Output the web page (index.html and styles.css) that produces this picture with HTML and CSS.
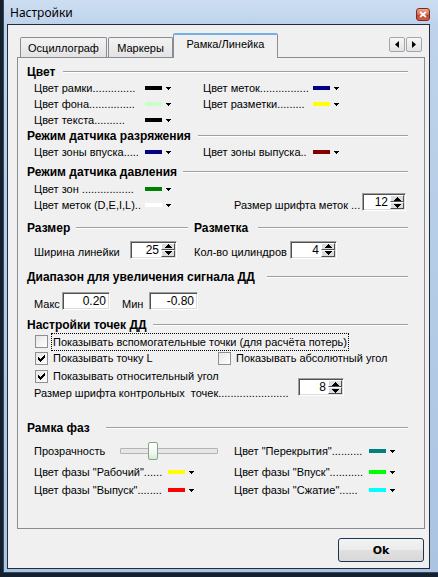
FILE: index.html
```html
<!DOCTYPE html>
<html lang="ru">
<head>
<meta charset="utf-8">
<title>Настройки</title>
<link rel="stylesheet" href="styles.css">
</head>
<body>
<svg class="defs" aria-hidden="true">
  <defs>
    <symbol id="dd" viewBox="0 0 5 3"><rect x="0" y="0" width="5" height="1"/><rect x="1" y="1" width="3" height="1"/><rect x="2" y="2" width="1" height="1"/></symbol>
    <symbol id="up" viewBox="0 0 7 4"><rect x="3" y="0" width="1" height="1"/><rect x="2" y="1" width="3" height="1"/><rect x="1" y="2" width="5" height="1"/><rect x="0" y="3" width="7" height="1"/></symbol>
    <symbol id="down" viewBox="0 0 7 4"><rect x="0" y="0" width="7" height="1"/><rect x="1" y="1" width="5" height="1"/><rect x="2" y="2" width="3" height="1"/><rect x="3" y="3" width="1" height="1"/></symbol>
    <symbol id="chk" viewBox="0 0 7 7"><rect x="6" y="0" width="1" height="1"/><rect x="5" y="1" width="2" height="1"/><rect x="0" y="2" width="1" height="1"/><rect x="4" y="2" width="3" height="1"/><rect x="0" y="3" width="2" height="1"/><rect x="3" y="3" width="3" height="1"/><rect x="0" y="4" width="5" height="1"/><rect x="1" y="5" width="3" height="1"/><rect x="2" y="6" width="1" height="1"/></symbol>
  </defs>
</svg>
<div class="window">
  <div class="titlebar">
    <span class="title">Настройки</span>
    <span class="close"><svg class="xicon" viewBox="0 0 8 7"><path d="M1 1 L7 6 M7 1 L1 6" stroke="#fff" stroke-width="1.8" fill="none"/></svg></span>
  </div>
  <div class="client">
    <div class="tabstrip">
      <div class="tab tab1">Осциллограф</div>
      <div class="tab tab2">Маркеры</div>
      <div class="tab active">Рамка/Линейка</div>
      <div class="tabscroll">
        <span class="sbtn"><svg class="tri" viewBox="0 0 4 7"><path d="M4 0 L0 3.5 L4 7Z"/></svg></span>
        <span class="sbtn"><svg class="tri" viewBox="0 0 4 7"><path d="M0 0 L4 3.5 L0 7Z"/></svg></span>
      </div>
    </div>
    <div class="panel">
      <div class="hdr mt6"><span class="ht w-cvet">Цвет</span></div>
      <div class="crow">
        <div class="ci cl"><span class="lbl l104">Цвет рамки..............</span><i class="sw c-black"></i><svg class="dd"><use href="#dd"/></svg></div>
        <div class="ci"><span class="lbl r107">Цвет меток................</span><i class="sw c-navy"></i><svg class="dd"><use href="#dd"/></svg></div>
      </div>
      <div class="crow">
        <div class="ci cl"><span class="lbl l104">Цвет фона...............</span><i class="sw c-pale"></i><svg class="dd"><use href="#dd"/></svg></div>
        <div class="ci"><span class="lbl r107">Цвет разметки.........</span><i class="sw c-yellow"></i><svg class="dd"><use href="#dd"/></svg></div>
      </div>
      <div class="crow">
        <div class="ci cl"><span class="lbl l104">Цвет текста..........</span><i class="sw c-black"></i><svg class="dd"><use href="#dd"/></svg></div>
      </div>
      <div class="hdr"><span class="ht w-razr">Режим датчика разряжения</span></div>
      <div class="crow">
        <div class="ci cl"><span class="lbl l104">Цвет зоны впуска.....</span><i class="sw c-navy"></i><svg class="dd"><use href="#dd"/></svg></div>
        <div class="ci"><span class="lbl r107">Цвет зоны выпуска..</span><i class="sw c-maroon"></i><svg class="dd"><use href="#dd"/></svg></div>
      </div>
      <div class="hdr mt4"><span class="ht w-davl">Режим датчика давления</span></div>
      <div class="crow mt1">
        <div class="ci cl"><span class="lbl l104">Цвет зон .................</span><i class="sw c-green"></i><svg class="dd"><use href="#dd"/></svg></div>
      </div>
      <div class="crow top">
        <div class="ci cl2"><span class="lbl l108">Цвет меток (D,E,I,L)..</span><i class="sw c-white"></i><svg class="dd"><use href="#dd"/></svg></div>
        <span class="lbl w128">Размер шрифта меток ...</span>
        <div class="spin s44 up4"><span class="sval">12</span><span class="sbtns"><span class="sb"><svg class="ar"><use href="#up"/></svg></span><span class="sb"><svg class="ar"><use href="#down"/></svg></span></span></div>
      </div>
      <div class="hrow mt7">
        <div class="hdr half"><span class="ht w-razm">Размер</span></div>
        <div class="hdr rest"><span class="ht w-razmet">Разметка</span></div>
      </div>
      <div class="srow mt4">
        <span class="slbl w96">Ширина линейки</span>
        <div class="spin s47"><span class="sval">25</span><span class="sbtns"><span class="sb"><svg class="ar"><use href="#up"/></svg></span><span class="sb"><svg class="ar"><use href="#down"/></svg></span></span></div>
        <span class="slbl w96 gap17">Кол-во цилиндров</span>
        <div class="spin s47"><span class="sval">4</span><span class="sbtns"><span class="sb"><svg class="ar"><use href="#up"/></svg></span><span class="sb"><svg class="ar"><use href="#down"/></svg></span></span></div>
      </div>
      <div class="hdr mt10"><span class="ht w-diap">Диапазон для увеличения сигнала ДД</span></div>
      <div class="erow mt7">
        <span class="slbl w28">Макс</span>
        <span class="edit e48">0.20</span>
        <span class="slbl w27 gap12">Мин</span>
        <span class="edit e49">-0.80</span>
      </div>
      <div class="hdr mt7"><span class="ht w-tochek">Настройки точек ДД</span></div>
      <div class="cbrow r17">
        <span class="cb"></span><span class="cblbl focus">Показывать вспомогательные точки (для расчёта потерь)</span>
      </div>
      <div class="cbrow r16">
        <div class="cbitem w183"><span class="cb"><svg class="chk"><use href="#chk"/></svg></span><span class="cblbl">Показывать точку L</span></div>
        <div class="cbitem"><span class="cb"></span><span class="cblbl">Показывать абсолютный угол</span></div>
      </div>
      <div class="cbrow r18 mt1">
        <span class="cb"><svg class="chk"><use href="#chk"/></svg></span><span class="cblbl">Показывать относительный угол</span>
      </div>
      <div class="crow top r15">
        <span class="lbl w264">Размер шрифта контрольных&nbsp; точек.......................</span>
        <div class="spin s46 up7"><span class="sval">8</span><span class="sbtns"><span class="sb"><svg class="ar"><use href="#up"/></svg></span><span class="sb"><svg class="ar"><use href="#down"/></svg></span></span></div>
      </div>
      <div class="hdr mt20"><span class="ht w-faz">Рамка фаз</span></div>
      <div class="prow mt6">
        <div class="pcol">
          <span class="lbl w86">Прозрачность</span>
          <div class="slider"><span class="track"></span><span class="thumb"></span></div>
        </div>
        <div class="ci"><span class="lbl w135">Цвет &quot;Перекрытия&quot;..........</span><i class="sw c-teal"></i><svg class="dd"><use href="#dd"/></svg></div>
      </div>
      <div class="prow mt3">
        <div class="pcol"><span class="lbl w134">Цвет фазы &quot;Рабочий&quot;......</span><i class="sw c-yellow"></i><svg class="dd"><use href="#dd"/></svg></div>
        <div class="ci"><span class="lbl w135">Цвет фазы &quot;Впуск&quot;...........</span><i class="sw c-lime"></i><svg class="dd"><use href="#dd"/></svg></div>
      </div>
      <div class="prow">
        <div class="pcol"><span class="lbl w134">Цвет фазы &quot;Выпуск&quot;........</span><i class="sw c-red"></i><svg class="dd"><use href="#dd"/></svg></div>
        <div class="ci"><span class="lbl w135">Цвет фазы &quot;Сжатие&quot;......</span><i class="sw c-cyan"></i><svg class="dd"><use href="#dd"/></svg></div>
      </div>
    </div>
    <div class="footer"><button class="ok">Ok</button></div>
  </div>
</div>
</body>
</html>
```
FILE: styles.css
```css
* { box-sizing: border-box; margin: 0; padding: 0; }
html, body { width: 438px; height: 577px; overflow: hidden; }
body {
  background: #16212f;
  font-family: "Liberation Sans", Arial, sans-serif;
  font-size: 11px;
  line-height: 1;
  color: #000;
}
.defs { position: absolute; width: 0; height: 0; overflow: hidden; }

.window {
  margin-left: 3px;
  width: 435px;
  height: 573px;
  border-left: 1px solid #34475f;
  border-bottom: 1px solid #34475f;
  background: linear-gradient(180deg, #cddef1 0, #bed3eb 24px, #abc4e2 100%);
  display: flex;
  flex-direction: column;
}
.titlebar { height: 24px; display: flex; align-items: flex-start; padding-left: 6px; }
.title {
  font-family: "Noto Sans", "Open Sans", sans-serif;
  font-size: 12px;
  line-height: 16px;
  margin-top: 5px;
}
.close {
  margin-left: auto;
  margin-right: 8px;
  margin-top: 8px;
  width: 14px;
  height: 13px;
  border: 1px solid #7a2c22;
  border-radius: 3px;
  background: linear-gradient(#eea592, #d76a52 50%, #c33d26 51%, #d25e42);
  display: flex;
  align-items: center;
  justify-content: center;
}
.xicon { width: 8px; height: 7px; display: block; }

.client {
  margin-left: 3px;
  width: 423px;
  height: 545px;
  border: 1px solid #1f2d3f;
  background: #f0f0f0;
  display: flex;
  flex-direction: column;
}

.tabstrip {
  margin: 8px 0 0 9px;
  width: 408px;
  height: 24px;
  display: flex;
  align-items: flex-end;
  padding-left: 3px;
  position: relative;
  z-index: 1;
}
.tab {
  height: 20px;
  border: 1px solid #898c95;
  border-bottom: 0;
  border-radius: 2px 2px 0 0;
  background: linear-gradient(#f3f3f3, #e3e3e3);
  display: flex;
  justify-content: center;
  padding-top: 4px;
  line-height: 13px;
  font-size: 11px;
  white-space: nowrap;
}
.tab1 { width: 87px; }
.tab2 { width: 65px; margin-left: 1px; }
.tab.active {
  width: 105px;
  height: 25px;
  margin-bottom: -1px;
  background: #f0f0f0;
  border-top: 2px solid #76aee6;
  padding-top: 3px;
}
.tabscroll {
  margin-left: auto;
  margin-right: 3px;
  align-self: flex-start;
  margin-top: 4px;
  display: flex;
  gap: 1px;
}
.sbtn {
  width: 16px;
  height: 15px;
  border: 1px solid #a3a6ab;
  border-radius: 2px;
  background: linear-gradient(#f7f7f7, #e2e2e2);
  display: flex;
  align-items: center;
  justify-content: center;
}
.tri { width: 4px; height: 7px; display: block; }

.panel {
  margin-left: 9px;
  width: 408px;
  height: 472px;
  border: 1px solid #898c95;
  background: #f0f0f0;
  padding: 0 16px 0 9px;
  display: flex;
  flex-direction: column;
}

.hdr {
  height: 16px;
  display: flex;
  align-items: center;
  font-family: "Liberation Sans", Arial, sans-serif;
  font-weight: bold;
  font-size: 12px;
  white-space: nowrap;
}
.hdr::after {
  content: "";
  flex: 1;
  height: 0;
  border-top: 1px solid #a0a0a0;
  border-bottom: 1px solid #ffffff;
}
.ht { display: block; line-height: 16px; }
.w-cvet { width: 36px; }
.w-razr { width: 171px; }
.w-davl { width: 156px; }
.w-razm { width: 49px; }
.w-razmet { width: 64px; }
.w-diap { width: 240px; }
.w-tochek { width: 126px; }
.w-faz { width: 79px; }

.hrow { display: flex; }
.hdr.half { width: 161px; }
.hdr.rest { flex: 1; margin-left: 6px; }

.mt1 { margin-top: 1px; }
.mt3 { margin-top: 3px; }
.mt4 { margin-top: 4px; }
.mt6 { margin-top: 6px; }
.mt7 { margin-top: 7px; }
.mt10 { margin-top: 10px; }
.mt20 { margin-top: 20px; }

.crow { display: flex; align-items: center; height: 16px; padding-left: 7px; }
.crow.top { align-items: flex-start; }
.crow.r15 { height: 15px; }
.ci { display: flex; align-items: center; height: 16px; }
.cl { width: 169px; }
.cl2 { width: 200px; }
.lbl { display: block; white-space: nowrap; overflow: hidden; line-height: 16px; }
.l104 { width: 104px; margin-right: 7px; }
.l108 { width: 108px; margin-right: 3px; }
.r107 { width: 107px; margin-right: 3px; }
.w128 { width: 128px; }
.w264 { width: 264px; }
.w86 { width: 86px; }
.w134 { width: 130px; margin-right: 4px; }
.w135 { width: 132px; margin-right: 3px; }

.sw { display: block; width: 17px; height: 4px; }
.dd { display: block; width: 5px; height: 3px; margin-left: 4px; fill: #000; }
.c-black { background: #000000; }
.c-navy { background: #000080; }
.c-pale { background: #c8ffc8; }
.c-yellow { background: #ffff00; }
.c-maroon { background: #800000; }
.c-green { background: #008000; }
.c-white { background: #ffffff; }
.c-teal { background: #008080; }
.c-lime { background: #00ff00; }
.c-red { background: #ff0000; }
.c-cyan { background: #00ffff; }

.spin {
  display: flex;
  height: 18px;
  border: 1px solid;
  border-color: #a0a0a0 #ffffff #ffffff #a0a0a0;
  box-shadow: inset 1px 1px 0 #505050, inset -1px -1px 0 #dcdcdc;
  background: #fff;
}
.s44 { width: 44px; }
.s46 { width: 46px; }
.s47 { width: 47px; }
.up4 { margin-top: -4px; }
.up7 { margin-top: -7px; }
.sval { flex: 1; text-align: right; padding-right: 2px; line-height: 16px; font-size: 12px; }
.sbtns { width: 14px; display: flex; flex-direction: column; margin: 1px 1px 1px 0; }
.sb {
  flex: 1;
  background: #dcdcdc;
  border: 1px solid;
  border-color: #ffffff #505050 #505050 #ffffff;
  display: flex;
  align-items: center;
  justify-content: center;
}
.ar { display: block; width: 7px; height: 4px; fill: #000; }

.srow { display: flex; align-items: center; height: 19px; padding-left: 7px; }
.slbl { display: block; white-space: nowrap; line-height: 16px; margin-top: 5px; }
.w96 { width: 96px; }
.w28 { width: 28px; }
.w27 { width: 27px; }
.gap17 { margin-left: 17px; }
.gap12 { margin-left: 12px; }

.erow { display: flex; align-items: center; height: 18px; padding-left: 7px; }
.edit {
  display: block;
  height: 18px;
  border: 1px solid;
  border-color: #a0a0a0 #ffffff #ffffff #a0a0a0;
  box-shadow: inset 1px 1px 0 #505050, inset -1px -1px 0 #dcdcdc;
  background: #fff;
  text-align: right;
  padding-right: 3px;
  line-height: 16px;
  font-size: 12px;
}
.e48 { width: 48px; }
.e49 { width: 49px; }

.cbrow { display: flex; align-items: center; padding-left: 8px; }
.r16 { height: 16px; }
.r17 { height: 17px; }
.r18 { height: 18px; }
.cbitem { display: flex; align-items: center; }
.w183 { width: 183px; }
.cb {
  width: 13px;
  height: 13px;
  border: 1px solid #8e8f8f;
  background: linear-gradient(135deg, #e6e6e6, #ffffff);
  display: flex;
  align-items: center;
  justify-content: center;
  flex: none;
}
.chk { display: block; width: 7px; height: 7px; fill: #000; }
.cblbl { display: block; white-space: nowrap; line-height: 16px; margin-left: 5px; }
.cblbl.focus {
  margin-left: 3px;
  padding: 0 1px;
  border: 1px dotted #000;
  align-self: flex-start;
  height: 18px;
}

.prow { display: flex; align-items: center; height: 18px; padding-left: 7px; }
.pcol { width: 200px; display: flex; align-items: center; }
.slider { position: relative; display: flex; align-items: center; height: 18px; }
.track {
  display: block;
  width: 98px;
  height: 6px;
  border: 1px solid #b4b4b4;
  border-radius: 1px;
  background: #e6e6e6;
}
.thumb {
  position: absolute;
  left: 28px;
  top: 0;
  width: 10px;
  height: 18px;
  border: 1px solid #84a884;
  border-radius: 2px;
  background: linear-gradient(#ffffff, #f2f7f2 60%, #d7ead7);
}

.footer { display: flex; justify-content: flex-end; padding-right: 5px; margin-top: 9px; }
.ok {
  width: 86px;
  height: 24px;
  border: 1px solid #1c3550;
  border-radius: 3px;
  background: linear-gradient(#f3f3f3, #ebebeb 50%, #e0e0e0 51%, #d8d8d8);
  font-family: "DejaVu Sans", sans-serif;
  font-weight: bold;
  font-size: 11px;
  color: #000;
}
```
